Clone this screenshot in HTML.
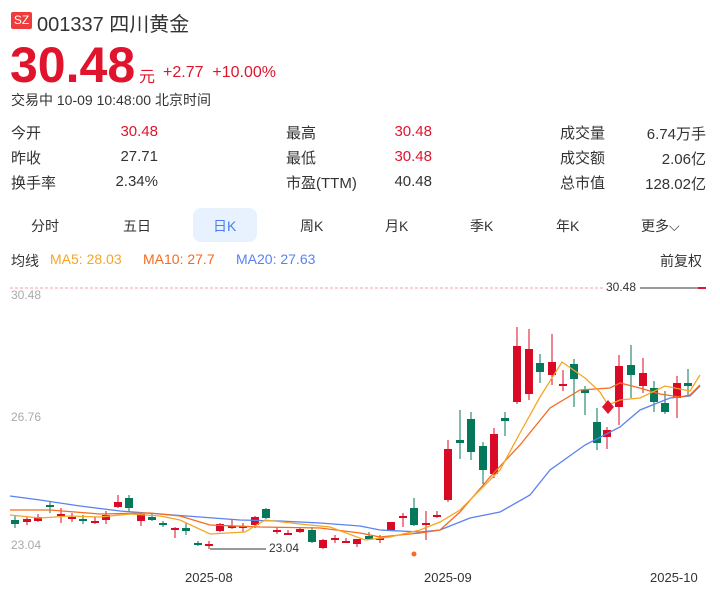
<!DOCTYPE html>
<html><head><meta charset="utf-8"><style>
*{margin:0;padding:0;box-sizing:border-box}
body{width:720px;height:593px;background:#fff;font-family:"Liberation Sans","Noto Sans CJK SC",sans-serif;color:#333;position:relative;overflow:hidden}
.a{position:absolute;white-space:nowrap}
.lab{font-size:15px;color:#333}
.val{font-size:15px;text-align:right;margin-top:1px}
.r{color:#e0142c}
.tab{font-size:14px;color:#333;top:216px}
</style></head><body>
<div class="a" style="left:11px;top:12px;width:21px;height:17px;background:#ef3b3b;border-radius:2px;color:#fff;font-size:12px;line-height:17px;text-align:center">SZ</div>
<div class="a" style="left:37px;top:8px;font-size:20px;color:#333">001337 四川黄金</div>
<div class="a r" style="left:10px;top:37px;font-size:50px;font-weight:bold;line-height:56px">30.48</div>
<div class="a r" style="left:139px;top:63px;font-size:16px">元</div>
<div class="a r" style="left:163px;top:64px;font-size:16px">+2.77 &nbsp;+10.00%</div>
<div class="a" style="left:11px;top:90px;font-size:14px;color:#333">交易中 10-09 10:48:00 北京时间</div>

<div class="a lab" style="left:11px;top:122px">今开</div><div class="a val r" style="left:60px;width:98px;top:122px">30.48</div>
<div class="a lab" style="left:11px;top:147px">昨收</div><div class="a val" style="left:60px;width:98px;top:147px">27.71</div>
<div class="a lab" style="left:11px;top:172px">换手率</div><div class="a val" style="left:60px;width:98px;top:172px">2.34%</div>
<div class="a lab" style="left:286px;top:122px">最高</div><div class="a val r" style="left:330px;width:102px;top:122px">30.48</div>
<div class="a lab" style="left:286px;top:147px">最低</div><div class="a val r" style="left:330px;width:102px;top:147px">30.48</div>
<div class="a lab" style="left:286px;top:172px">市盈(TTM)</div><div class="a val" style="left:330px;width:102px;top:172px">40.48</div>
<div class="a lab" style="left:560px;top:122px">成交量</div><div class="a val" style="left:600px;width:106px;top:122px">6.74万手</div>
<div class="a lab" style="left:560px;top:147px">成交额</div><div class="a val" style="left:600px;width:106px;top:147px">2.06亿</div>
<div class="a lab" style="left:560px;top:172px">总市值</div><div class="a val" style="left:600px;width:106px;top:172px">128.02亿</div>

<div class="a" style="left:193px;top:208px;width:64px;height:34px;background:#e8f1fe;border-radius:8px"></div>
<div class="a tab" style="left:31px">分时</div>
<div class="a tab" style="left:123px">五日</div>
<div class="a tab" style="left:213px;color:#4a7ef0">日K</div>
<div class="a tab" style="left:300px">周K</div>
<div class="a tab" style="left:385px">月K</div>
<div class="a tab" style="left:470px">季K</div>
<div class="a tab" style="left:556px">年K</div>
<div class="a tab" style="left:641px">更多⌵</div>

<div class="a" style="left:11px;top:251px;font-size:14px">均线</div>
<div class="a" style="left:50px;top:251px;font-size:14px;color:#f5a623">MA5: 28.03</div>
<div class="a" style="left:143px;top:251px;font-size:14px;color:#f56b1f">MA10: 27.7</div>
<div class="a" style="left:236px;top:251px;font-size:14px;color:#5a82f0">MA20: 27.63</div>
<div class="a" style="left:660px;top:251px;font-size:14px">前复权</div>

<div class="a" style="left:11px;top:288px;font-size:12px;color:#aaa">30.48</div>
<div class="a" style="left:11px;top:410px;font-size:12px;color:#aaa">26.76</div>
<div class="a" style="left:11px;top:538px;font-size:12px;color:#aaa">23.04</div>
<div class="a" style="left:606px;top:280px;font-size:12px;color:#333">30.48</div>
<div class="a" style="left:269px;top:541px;font-size:12px;color:#333">23.04</div>
<div class="a" style="left:185px;top:570px;font-size:13px;color:#333">2025-08</div>
<div class="a" style="left:424px;top:570px;font-size:13px;color:#333">2025-09</div>
<div class="a" style="left:650px;top:570px;font-size:13px;color:#333">2025-10</div>

<svg class="a" style="left:0;top:0" width="720" height="593">
<line x1="10" y1="288" x2="604" y2="288" stroke="#f4a0a8" stroke-dasharray="3,2" stroke-width="1"/>
<line x1="640" y1="288" x2="700" y2="288" stroke="#333" stroke-width="1"/>
<line x1="698" y1="288" x2="706" y2="288" stroke="#e0142c" stroke-width="2"/>
<line x1="210" y1="549" x2="266" y2="549" stroke="#333" stroke-width="1"/>
<circle cx="414" cy="554" r="2.5" fill="#f56b1f"/>
<g id="c"></g>
<polyline fill="none" stroke="#5a82f0" stroke-width="1.3" points="10,496 40,500 80,506 120,511 160,514 200,517 240,520 280,521 320,523 360,526 380,530 420,532 440,530 470,518 500,512 530,495 550,470 585,445 620,427 640,410 670,398 690,396 700,386"/>
<polyline fill="none" stroke="#f56b1f" stroke-width="1.3" points="10,510 50,510 100,514 150,513 180,516 210,525 260,527 320,528 360,533 380,537 420,533 440,530 460,512 490,477 520,445 550,408 580,390 610,388 620,383 640,388 660,394 680,397 690,395 700,385"/>
<polyline fill="none" stroke="#f5a623" stroke-width="1.3" points="10,515 40,518 70,516 100,517 130,514 160,516 180,520 210,534 245,532 265,520 300,524 330,527 365,540 390,537 420,530 440,522 460,510 480,490 500,470 520,433 540,397 562,362 585,378 600,392 608,405 620,400 640,398 665,386 690,391 700,375"/>
<polygon points="608,400 614,407 608,414 602,407" fill="#e0142c"/>
</svg>
<script>
var d=[[15,520,524,516,528,'g'],[27,519,522,517,525,'r'],[38,517,521,514,522,'r'],[50,505,507,502,513,'g'],[61,514,516,508,523,'r'],[72,517,518,513,522,'r'],[83,519,520,515,524,'g'],[95,521,522,517,524,'r'],[106,515,520,511,524,'r'],[118,502,507,495,508,'r'],[129,498,508,495,511,'g'],[141,514,521,512,526,'r'],[152,517,520,513,521,'g'],[163,523,524,521,527,'g'],[175,528,529,527,538,'r'],[186,528,531,523,535,'g'],[198,543,544,541,546,'g'],[209,544,545,541,549,'r'],[220,524,531,523,532,'r'],[232,526,528,519,529,'r'],[243,526,528,523,532,'r'],[255,517,525,516,528,'r'],[266,509,518,508,519,'g'],[277,530,532,527,534,'r'],[288,533,534,530,535,'r'],[300,529,532,528,533,'r'],[312,530,542,527,543,'g'],[323,540,548,539,549,'r'],[335,538,540,535,543,'r'],[346,541,542,538,543,'r'],[357,539,544,539,547,'r'],[369,536,539,532,540,'g'],[380,538,540,535,543,'r'],[391,522,530,522,531,'r'],[403,516,518,513,527,'r'],[414,508,525,498,526,'g'],[426,523,525,511,540,'r'],[437,515,516,511,518,'r'],[448,449,500,440,502,'r'],[460,440,443,410,459,'g'],[471,419,452,412,460,'g'],[483,446,470,442,484,'g'],[494,434,474,428,478,'r'],[505,418,421,412,436,'g'],[517,346,402,327,404,'r'],[529,349,394,329,400,'r'],[540,363,372,354,383,'g'],[552,362,375,334,385,'r'],[563,384,386,370,391,'r'],[574,364,379,359,407,'g'],[585,390,393,386,415,'g'],[597,422,443,408,450,'g'],[607,430,437,427,449,'r'],[619,366,407,355,425,'r'],[631,365,375,345,398,'g'],[643,373,386,358,393,'r'],[654,388,402,381,412,'g'],[665,403,412,391,414,'g'],[677,383,398,376,418,'r'],[688,383,386,369,395,'g']];
var s='';d.forEach(function(c){var col=c[5]=='r'?'#d90a26':'#05775a';var h=Math.max(c[2]-c[1],2);s+='<line x1="'+c[0]+'" y1="'+c[3]+'" x2="'+c[0]+'" y2="'+c[4]+'" stroke="'+col+'" stroke-width="1"/><rect x="'+(c[0]-4)+'" y="'+c[1]+'" width="8" height="'+h+'" fill="'+col+'"/>';});
document.getElementById('c').innerHTML=s;
</script>
</body></html>
